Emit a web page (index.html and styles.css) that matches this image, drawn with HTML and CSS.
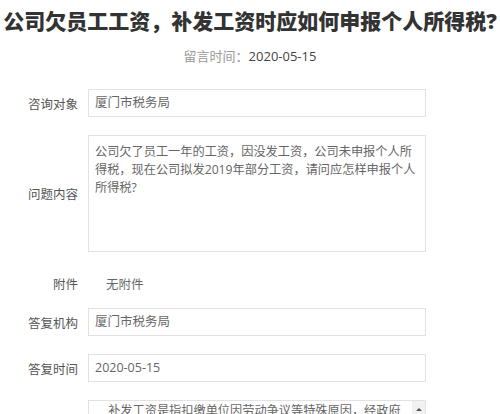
FILE: index.html
```html
<!DOCTYPE html>
<html lang="zh-CN">
<head>
<meta charset="utf-8">
<link rel="stylesheet" href="styles.css">
</head>
<body>
<div class="page">
  <h1 class="title">公司欠员工工资，补发工资时应如何申报个人所得税?</h1>
  <div class="meta"><span class="meta-label">留言时间：</span><span class="meta-value">2020-05-15</span></div>

  <div class="row first">
    <div class="label">咨询对象</div>
    <div class="field input">厦门市税务局</div>
  </div>

  <div class="row">
    <div class="label">问题内容</div>
    <div class="field area">公司欠了员工一年的工资，因没发工资，公司未申报个人所<br>得税，现在公司拟发2019年部分工资，请问应怎样申报个人<br>所得税?</div>
  </div>

  <div class="row row-attach">
    <div class="label">附件</div>
    <div class="attach">无附件</div>
  </div>

  <div class="row">
    <div class="label">答复机构</div>
    <div class="field input">厦门市税务局</div>
  </div>

  <div class="row">
    <div class="label">答复时间</div>
    <div class="field input">2020-05-15</div>
  </div>

  <div class="row">
    <div class="label"></div>
    <div class="field area answer">
      <div class="answer-text">　补发工资是指扣缴单位因劳动争议等特殊原因，经政府</div>
      <div class="scrollbar"><span class="arrow"></span></div>
    </div>
  </div>
</div>
</body>
</html>
```

FILE: styles.css
```css
html, body {
  margin: 0;
  padding: 0;
  background: #fff;
}
body {
  font-family: "Open Sans", "Noto Sans CJK SC", sans-serif;
  font-size: 12.5px;
  color: #555;
  overflow: hidden;
}
.page {
  width: 500px;
  height: 414px;
  overflow: hidden;
}
.title {
  margin: 0;
  padding-top: 7px;
  height: 28px;
  line-height: 28px;
  font-size: 21px;
  font-weight: 900;
  color: #333;
  text-align: center;
  white-space: nowrap;
  font-family: "Open Sans", "Noto Sans CJK SC", sans-serif;
}
.meta {
  margin-top: 12px;
  height: 18px;
  line-height: 18px;
  text-align: center;
  font-size: 13px;
}
.meta-label { color: #999; }
.meta-value { color: #444; }

.row {
  display: flex;
  align-items: center;
  gap: 10px;
  margin-top: 18px;
}
.row.first { margin-top: 24px; }
.label {
  width: 78px;
  flex: none;
  text-align: right;
  color: #555;
  font-size: 12.5px;
}
.field {
  box-sizing: border-box;
  width: 338px;
  flex: none;
  border: 1px solid #e2e2e2;
  background: #fff;
  color: #666;
  padding: 0 6px;
}
.input {
  height: 28px;
  line-height: 26px;
}
.area {
  height: 117px;
  padding-top: 7px;
  line-height: 18px;
  font-size: 12.2px;
  white-space: nowrap;
  overflow: hidden;
}
.row-attach {
  height: 27px;
  margin-top: 18px;
  margin-bottom: -7px;
}
.attach {
  padding-left: 18px;
  color: #666;
}
.answer {
  position: relative;
  padding-top: 1px;
  padding-left: 7px;
  padding-right: 16px;
}
.answer-text {
  white-space: nowrap;
}
.scrollbar {
  position: absolute;
  top: 0;
  right: 0;
  width: 13px;
  height: 100%;
  background: #f1f1f1;
}
.arrow {
  position: absolute;
  top: 7px;
  left: 4px;
  width: 0;
  height: 0;
  border-left: 3px solid transparent;
  border-right: 3px solid transparent;
  border-bottom: 3px solid #555;
}
```
